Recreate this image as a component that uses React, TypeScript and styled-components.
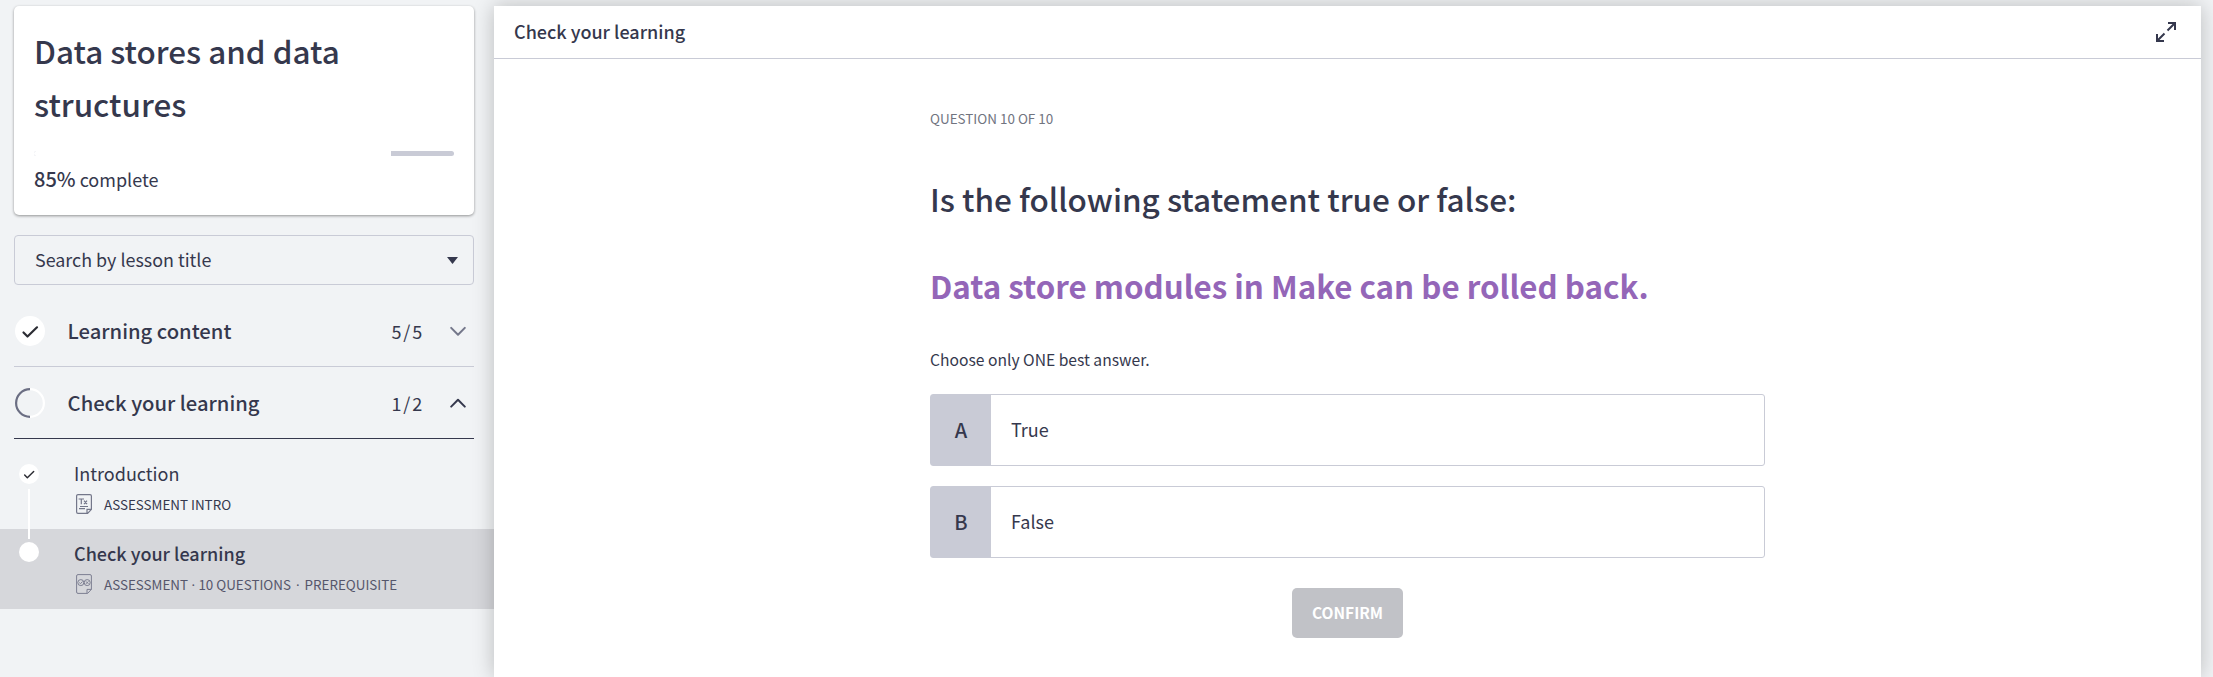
import React from 'react';
import styled, { createGlobalStyle } from 'styled-components';

const ink = '#35384d';
const rule = '#c9cbd6';

const GlobalStyle = createGlobalStyle`
  * { box-sizing: border-box; }
  body {
    margin: 0;
    background: #f1f3f5;
    color: ${ink};
    font-family: 'Noto Sans CJK SC', 'Noto Sans', sans-serif;
    overflow: hidden;
  }
  h1, h2, h3, p { margin: 0; font-weight: 500; }
  svg { display: block; flex: none; }
`;

const Page = styled.div`
  display: flex;
  width: 100%;
  height: 100vh;
  padding: 6px 12px 0 0;
`;

const Sidebar = styled.aside`
  width: 494px;
  flex: none;
`;

const SidebarInner = styled.div`
  padding: 0 20px 0 14px;
`;

const ProgressCard = styled.section`
  height: 209px;
  padding: 18px 20px 0;
  background: #fff;
  border-radius: 5px;
  box-shadow: 0 1px 3px rgba(0, 0, 0, 0.4);
`;

const CourseTitle = styled.h1`
  font-size: 31.4px;
  line-height: 53px;
`;

const Track = styled.div`
  height: 5px;
  margin-top: 21px;
  background: ${rule};
  border-radius: 3px;
  overflow: hidden;
`;

const Fill = styled.div`
  width: 85%;
  height: 100%;
  background: #fff;
`;

const Completion = styled.p`
  margin-top: 8px;
  font-size: 18px;
  font-weight: 400;
  line-height: 30px;
`;

const Percent = styled.span`
  font-size: 20px;
  font-weight: 500;
`;

const SearchBox = styled.div`
  display: flex;
  align-items: center;
  justify-content: space-between;
  height: 50px;
  margin-top: 20px;
  padding: 0 15px 0 20px;
  border: 1px solid ${rule};
  border-radius: 4px;
  font-size: 17.9px;
`;

const SearchLabel = styled.span`
  padding-bottom: 3px;
`;

const SectionHeader = styled.div<{ $open?: boolean }>`
  display: flex;
  align-items: center;
  height: 72px;
  padding: 0 8px 0 1px;
  border-bottom: 1px solid ${p => (p.$open ? ink : rule)};
`;

const Sections = styled.div`
  padding-top: 10px;
`;

const SectionName = styled.h3`
  flex: 1;
  margin-left: 22.6px;
  font-size: 20.2px;
  line-height: 30px;
`;

const SectionCount = styled.span`
  margin-right: 26px;
  font-size: 18px;
  letter-spacing: 1.8px;
  line-height: 30px;
`;

const LessonList = styled.div`
  padding-top: 10px;
`;

const LessonRow = styled.div<{ $active?: boolean }>`
  display: flex;
  height: 80px;
  padding-left: 19px;
  background: ${p => (p.$active ? '#d6d7db' : 'transparent')};
`;

const Marker = styled.div<{ $active?: boolean }>`
  width: 20px;
  padding-top: ${p => (p.$active ? 13 : 15)}px;
`;

const Connector = styled.div`
  position: relative;
  z-index: 1;
  width: 2px;
  height: 50px;
  margin: 5px 0 0 9px;
  background: #fff;
`;

const LessonBody = styled.div`
  padding: 9px 0 0 35px;
`;

const LessonName = styled.h3<{ $active?: boolean }>`
  font-size: 18px;
  font-weight: ${p => (p.$active ? 500 : 400)};
  line-height: 30px;
`;

const LessonMeta = styled.div<{ $active?: boolean }>`
  display: flex;
  align-items: center;
  gap: 12px;
  height: 20px;
  margin: 6px 0 0 2px;
  color: ${p => (p.$active ? '#55566b' : ink)};
  font-size: 13.4px;
  line-height: 20px;
  white-space: pre;
`;

const Dot = styled.span<{ $space?: number }>`
  margin: 0 ${p => p.$space ?? 3.4}px;
  font-family: 'Noto Sans', sans-serif;
`;

const Main = styled.main`
  position: relative;
  flex: 1;
  background: #fff;
  box-shadow: 0 0 20px rgba(0, 0, 0, 0.23);
`;

const MainHeader = styled.header`
  display: flex;
  align-items: center;
  justify-content: space-between;
  height: 53px;
  padding: 0 25px 0 20px;
  border-bottom: 1px solid ${rule};
`;

const MainTitle = styled.h2`
  padding-bottom: 3px;
  font-size: 18px;
  line-height: 30px;
`;

const Question = styled.section`
  width: 835px;
  margin: 0 auto;
  padding-top: 49px;
`;

const QuestionNumber = styled.p`
  color: #71747f;
  font-size: 13.45px;
  font-weight: 400;
  line-height: 20px;
`;

const Prompt = styled.h1`
  margin-top: 45px;
  font-size: 31.5px;
  line-height: 50px;
`;

const Statement = styled.h1`
  margin-top: 38px;
  color: #9466b8;
  font-size: 31.3px;
  font-weight: 700;
  line-height: 50px;
`;

const Hint = styled.p`
  margin-top: 39px;
  font-size: 15.65px;
  font-weight: 400;
  line-height: 20px;
`;

const Options = styled.div`
  display: grid;
  gap: 20px;
  margin-top: 24px;
`;

const Option = styled.div`
  display: flex;
  height: 72px;
  border: 1px solid ${rule};
  border-radius: 3px;
  font-size: 18px;
  line-height: 69px;
`;

const OptionKey = styled.div`
  width: 60px;
  background: ${rule};
  font-size: 20px;
  font-weight: 500;
  text-align: center;
`;

const OptionText = styled.div`
  padding-left: 20px;
`;

const Confirm = styled.button`
  display: block;
  width: 111px;
  height: 50px;
  margin: 30px auto 0;
  padding: 0 0 2px;
  border: 0;
  border-radius: 5px;
  background: #c1c2c7;
  color: #fff;
  font: 700 15.5px 'Noto Sans CJK SC', sans-serif;
`;

const CheckBadge = ({ size }: { size: number }) => (
  <svg width={size} height={size} viewBox="0 0 30 30" fill="none">
    <circle cx="15" cy="15" r="15" fill="#fff" />
    <path d="M8.5 16.5l4 4L22 11.3" stroke="#2b2c33" strokeWidth="2.2" strokeLinecap="round" strokeLinejoin="round" />
  </svg>
);

const HalfRing = () => (
  <svg width="30" height="30" viewBox="0 0 30 30" fill="none" strokeWidth="2.2">
    <path d="M15 1.1a13.9 13.9 0 0 1 0 27.8" stroke="#fff" />
    <path d="M15 1.1a13.9 13.9 0 0 0 0 27.8" stroke="#6b6e83" />
  </svg>
);

const EmptyBadge = () => (
  <svg width="20" height="20" viewBox="0 0 20 20"><circle cx="10" cy="10" r="10" fill="#fff" /></svg>
);

const Chevron = ({ up }: { up?: boolean }) => (
  <svg width="16" height="10" viewBox="0 0 16 10" fill="none" stroke={up ? ink : '#74778a'} strokeWidth="2" strokeLinecap="round" strokeLinejoin="round">
    <path d={up ? 'M1.2 8.6L8 1.8l6.8 6.8' : 'M1.2 1.9L8 8.7l6.8-6.8'} />
  </svg>
);

const Caret = () => (
  <svg width="11" height="7" viewBox="0 0 11 7"><path d="M0 0h11L5.5 7z" fill={ink} /></svg>
);

const PageOutline = () => (
  <path d="M15.4 15.4L11.6 19.4H2A1.4 1.4 0 0 1 .6 18V2A1.4 1.4 0 0 1 2 .6h12A1.4 1.4 0 0 1 15.4 2zM11 19.4v-4h4.4" />
);

const TextIcon = () => (
  <svg width="16" height="20" viewBox="0 0 16 20" fill="none" stroke="#74778a" strokeWidth="1.2">
    <PageOutline />
    <path d="M2.6 5h5.4M5.3 5v5.2M8 6.6l3 3.6M11 6.6l-3 3.6M4 12.5h8M3 14.7h6" />
  </svg>
);

const QuizIcon = () => (
  <svg width="16" height="20" viewBox="0 0 16 20" fill="none" stroke="#7d7f92" strokeWidth="1">
    <PageOutline />
    <circle cx="4.8" cy="8.6" r="3" />
    <circle cx="11.2" cy="8.6" r="3" />
    <path d="M3.3 8.6l1.2 1.1 2-2.2M10 7.4l2.4 2.4M12.4 7.4L10 9.8" />
  </svg>
);

const ExpandIcon = () => (
  <svg width="20" height="20" viewBox="0 0 20 20" fill="none" stroke={ink} strokeWidth="2">
    <path d="M12 1h7v7M19 1l-7.5 7.5M8 19H1v-7M1 19l7.5-7.5" />
  </svg>
);

export default function App() {
  return (
    <>
      <GlobalStyle />
      <Page>
        <Sidebar>
          <SidebarInner>
            <ProgressCard>
              <CourseTitle>Data stores and data<br />structures</CourseTitle>
              <Track><Fill /></Track>
              <Completion><Percent>85%</Percent> complete</Completion>
            </ProgressCard>
            <SearchBox><SearchLabel>Search by lesson title</SearchLabel><Caret /></SearchBox>
            <Sections>
              <SectionHeader>
                <CheckBadge size={30} />
                <SectionName>Learning content</SectionName>
                <SectionCount>5/5</SectionCount>
                <Chevron />
              </SectionHeader>
              <SectionHeader $open>
                <HalfRing />
                <SectionName>Check your learning</SectionName>
                <SectionCount>1/2</SectionCount>
                <Chevron up />
              </SectionHeader>
            </Sections>
          </SidebarInner>
          <LessonList>
            <LessonRow>
              <Marker><CheckBadge size={20} /><Connector /></Marker>
              <LessonBody>
                <LessonName>Introduction</LessonName>
                <LessonMeta><TextIcon /><span>ASSESSMENT INTRO</span></LessonMeta>
              </LessonBody>
            </LessonRow>
            <LessonRow $active>
              <Marker $active><EmptyBadge /></Marker>
              <LessonBody>
                <LessonName $active>Check your learning</LessonName>
                <LessonMeta $active>
                  <QuizIcon />
                  <span>ASSESSMENT<Dot>·</Dot>10 QUESTIONS<Dot $space={5}>·</Dot>PREREQUISITE</span>
                </LessonMeta>
              </LessonBody>
            </LessonRow>
          </LessonList>
        </Sidebar>
        <Main>
          <MainHeader><MainTitle>Check your learning</MainTitle><ExpandIcon /></MainHeader>
          <Question>
            <QuestionNumber>QUESTION 10 OF 10</QuestionNumber>
            <Prompt>Is the following statement true or false:</Prompt>
            <Statement>Data store modules in Make can be rolled back.</Statement>
            <Hint>Choose only ONE best answer.</Hint>
            <Options>
              <Option><OptionKey>A</OptionKey><OptionText>True</OptionText></Option>
              <Option><OptionKey>B</OptionKey><OptionText>False</OptionText></Option>
            </Options>
            <Confirm>CONFIRM</Confirm>
          </Question>
        </Main>
      </Page>
    </>
  );
}
